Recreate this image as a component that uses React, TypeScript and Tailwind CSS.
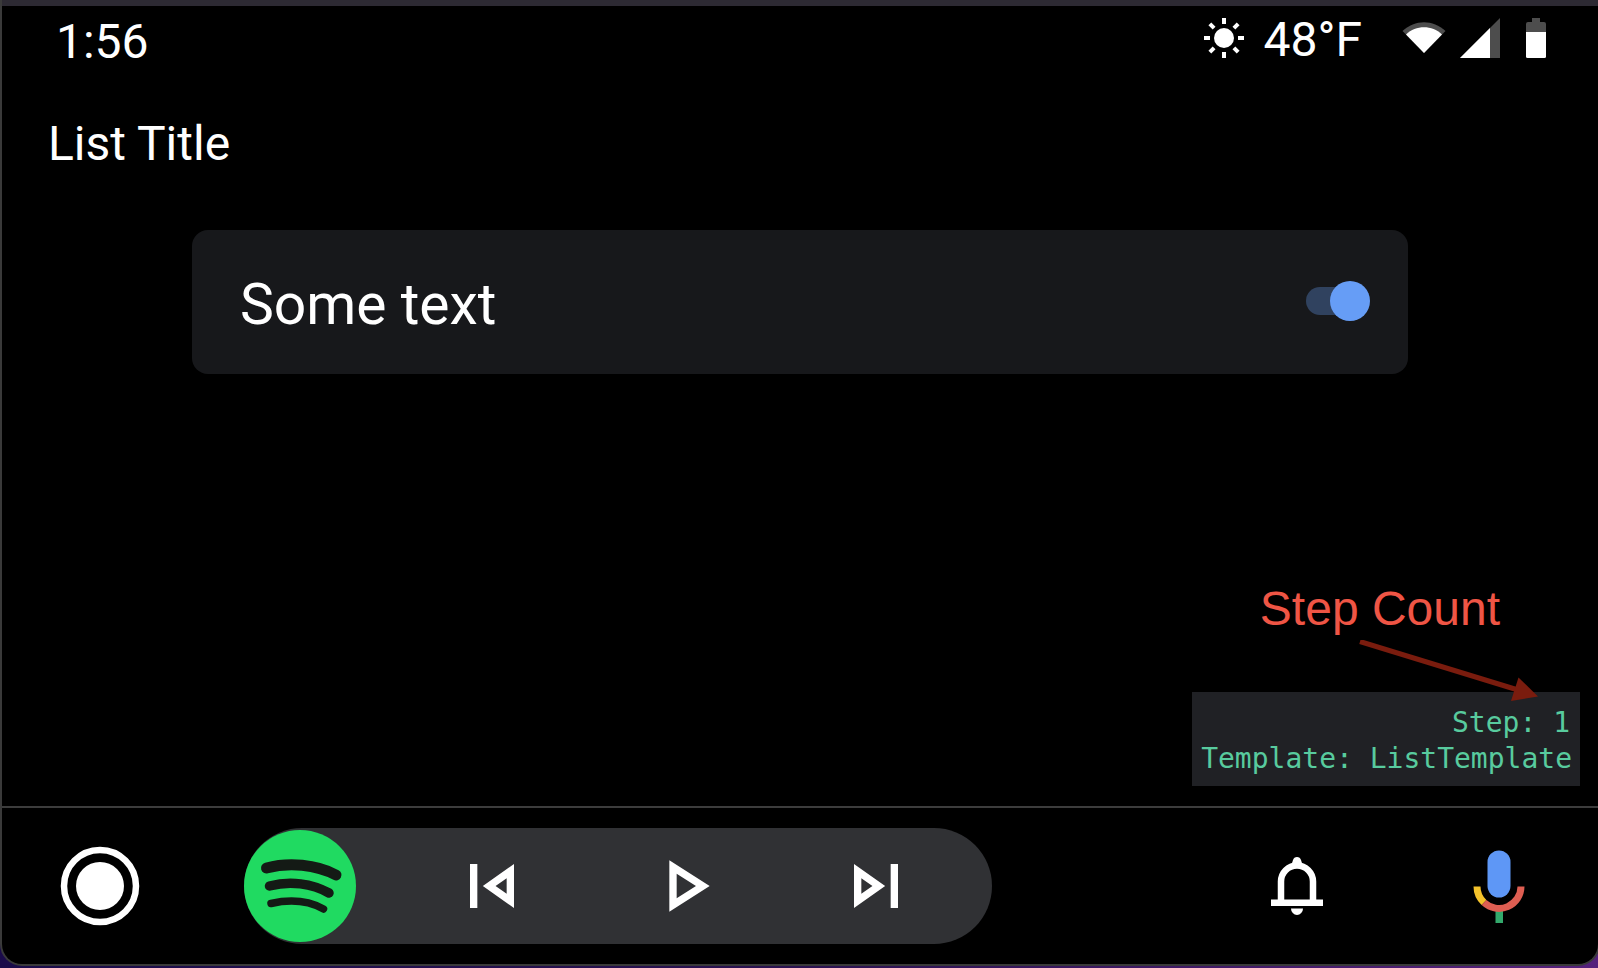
import { useState } from "react";

function SunIcon() {
  return (
    <svg viewBox="0 0 40 40" className="size-10" fill="#fff" aria-hidden="true">
      <circle cx="20" cy="20" r="10" />
      {[0, 45, 90, 135, 180, 225, 270, 315].map((a) => (
        <rect key={a} x="18" y="0" width="4" height="6" transform={`rotate(${a} 20 20)`} />
      ))}
    </svg>
  );
}

function WifiIcon() {
  return (
    <svg viewBox="0 0 44 32" className="h-8 w-11" aria-hidden="true">
      <path d="M0.500 9C13 -2.600 31 -2.600 43.500 9L22 31Z" fill="#4d4d4d" />
      <path d="M4 12.500C14 2.800 30 2.800 40 12.500L22 31Z" fill="#fff" />
    </svg>
  );
}

function SignalIcon() {
  return (
    <svg viewBox="0 0 40 40" className="size-10" aria-hidden="true">
      <path d="M0 40L40 0V40Z" fill="#4d4d4d" />
      <path d="M0 40L30 10V40Z" fill="#fff" />
    </svg>
  );
}

function BatteryIcon() {
  return (
    <svg viewBox="0 0 20 40" className="h-10 w-5" aria-hidden="true">
      <path d="M6 0H14V4H18Q20 4 20 6V15H0V6Q0 4 2 4H6Z" fill="#4d4d4d" />
      <path d="M0 14H20V38.500Q20 40 18.500 40H1.500Q0 40 0 38.500Z" fill="#fff" />
    </svg>
  );
}

function SpotifyIcon() {
  return (
    <svg viewBox="0 0 112 112" className="size-28" aria-hidden="true">
      <circle cx="56" cy="56" r="56" fill="#20da61" />
      <g fill="none" stroke="#141a15" strokeLinecap="round">
        <path d="M22.500 38C45 32 72 34.500 92 45" strokeWidth="11" />
        <path d="M25.500 56C46 50.500 68 53.500 85 63" strokeWidth="9.500" />
        <path d="M27 73.500C45 69.500 64 70.500 79.500 79" strokeWidth="7.500" />
      </g>
    </svg>
  );
}

function MediaButton({ label, path }: { label: string; path: string }) {
  return (
    <button type="button" aria-label={label} className="flex h-full flex-1 items-center justify-center">
      <svg viewBox="0 0 24 24" className="size-[88px]" fill="#fff" fillRule="evenodd" aria-hidden="true">
        <path d={path} />
      </svg>
    </button>
  );
}

function BellIcon() {
  return (
    <svg viewBox="0 0 52 60" className="h-[60px] w-[52px]" aria-hidden="true">
      <path d="M20.500 9L22 4a4.200 4.200 0 0 1 8 0L31.500 9Z" fill="#fff" />
      <path d="M10 45V25.500a16 16 0 0 1 32 0V45" fill="none" stroke="#fff" strokeWidth="6.500" />
      <path d="M0 43.500H52V50H0Z" fill="#fff" />
      <path d="M20 52.500H32a6 6.500 0 0 1 -12 0Z" fill="#fff" />
    </svg>
  );
}

function MicIcon() {
  return (
    <svg viewBox="0 0 52 74" className="h-[74px] w-[52px]" aria-hidden="true">
      <rect x="14.500" y="1.500" width="23" height="47" rx="11.500" fill="#5e97f6" />
      <rect x="22.500" y="60" width="7.500" height="14" fill="#33a96c" />
      <path d="M4 37.500A22 22 0 0 0 11 53.500" fill="none" stroke="#f4c22b" strokeWidth="7" />
      <path d="M11 53.500A22 22 0 0 0 48 37.500" fill="none" stroke="#de5e52" strokeWidth="7" />
    </svg>
  );
}

export default function App() {
  const [on, setOn] = useState(true);
  return (
    <div className="flex min-h-screen flex-col overflow-hidden bg-linear-to-r from-[#1a0b4a] via-[#2a1150] to-[#55207c] pb-[2px] font-['Roboto',sans-serif] text-white">
      <div className="-mr-[2px] flex flex-1 flex-col overflow-hidden rounded-b-[22px] border-x-2 border-b-2 border-[#3a3a3a] bg-black">
        <div className="-ml-[2px] h-[6px] bg-[#2d2a33]" />
        <header className="flex items-start justify-between pt-[10px] pr-[52px] pl-[54px] text-[48px] leading-[48px]">
          <time className="pt-[2px]">1:56</time>
          <div className="flex items-start">
            <div className="pt-[2px]">
              <SunIcon />
            </div>
            <span className="ml-5">48°F</span>
            <div className="ml-[40px] pt-[6px]">
              <WifiIcon />
            </div>
            <div className="ml-[14px] pt-[2px]">
              <SignalIcon />
            </div>
            <div className="ml-[26px] pt-[2px]">
              <BatteryIcon />
            </div>
          </div>
        </header>

        <main className="flex flex-1 flex-col">
          <h1 className="mt-[54px] pl-[46px] text-[48px] leading-[48px]">List Title</h1>
          <label className="mx-[190px] mt-[62px] flex h-[144px] items-center justify-between rounded-2xl bg-[#17181b] pr-[38px] pl-[48px]">
            <span className="pt-[6px] text-[57px] leading-[56px]">Some text</span>
            <span className="relative mb-[2px] flex h-10 w-16 items-center">
              <input
                type="checkbox"
                role="switch"
                aria-label="Some text"
                checked={on}
                onChange={() => setOn(!on)}
                className="peer absolute inset-0 z-10 m-0 size-full cursor-pointer opacity-0"
              />
              <span className="h-7 w-[60px] rounded-full bg-[#4a4d52] peer-checked:bg-[#30425f]" />
              <span className="absolute left-0 size-10 rounded-full bg-[#9aa0a6] peer-checked:left-6 peer-checked:bg-[#669df6]" />
            </span>
          </label>

          <div className="mt-auto mr-[18px] mb-5 flex flex-col items-end">
            <p className="mr-[80px] mb-[56px] font-['Liberation_Sans',sans-serif] text-[48px] leading-[54px] text-[#ef5545]">
              Step Count
            </p>
            <div className="relative bg-[#202125] pt-[13px] pr-2 pb-[9px] pl-[9px] text-right font-['DejaVu_Sans_Mono',monospace] text-[28px] leading-[36px] text-[#58cb9e]">
              <p className="pr-[2px]">Step: 1</p>
              <p>Template: ListTemplate</p>
              <svg viewBox="0 0 180 64" className="absolute -top-[52px] right-[42px] h-16 w-[180px]" aria-hidden="true">
                <path d="M2 1.500L160 50" stroke="#7a1c0e" strokeWidth="5" />
                <path d="M180 56.500L160.500 37.500L153 61Z" fill="#7a1c0e" />
              </svg>
            </div>
          </div>
        </main>

        <nav className="flex h-[158px] items-center border-t-2 border-[#3c3c3c] pr-[73px] pl-[58px]">
          <button type="button" aria-label="Home">
            <svg viewBox="0 0 80 80" className="size-20" aria-hidden="true">
              <circle cx="40" cy="40" r="36" fill="none" stroke="#fff" strokeWidth="6.500" />
              <circle cx="40" cy="40" r="24" fill="#fff" />
            </svg>
          </button>
          <div className="ml-[104px] flex h-[116px] w-[748px] items-center rounded-full bg-[#303134] pr-5">
            <button type="button" aria-label="Spotify" className="mr-10">
              <SpotifyIcon />
            </button>
            <MediaButton label="Previous" path="M6 6h2v12H6zM9.500 12l8.500 6V6zM16 14.140L12.970 12 16 9.860z" />
            <MediaButton label="Play" path="M10 8.640L15.270 12 10 15.360V8.640M8 5v14l11-7L8 5z" />
            <MediaButton label="Next" path="M6 18l8.500-6L6 6zM8 9.860L11.030 12 8 14.140zM16 6h2v12h-2z" />
          </div>
          <div className="ml-auto flex items-center gap-[150px]">
            <button type="button" aria-label="Notifications">
              <BellIcon />
            </button>
            <button type="button" aria-label="Voice assistant">
              <MicIcon />
            </button>
          </div>
        </nav>
      </div>
    </div>
  );
}
